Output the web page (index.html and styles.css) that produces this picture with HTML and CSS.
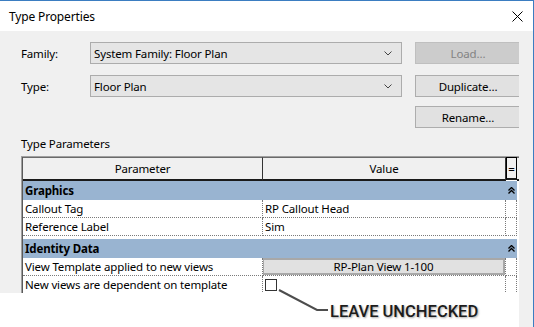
FILE: index.html
```html
<!DOCTYPE html>
<html lang="en">

<head>
    <meta charset="UTF-8" />
    <title>Type Properties</title>
    <link rel="stylesheet" href="styles.css">
</head>

<body>

    <div class="window">
        <div class="titlebar">
            <span class="title">Type Properties</span>
            <svg class="close" width="11" height="11" viewBox="0 0 11 11">
                <path d="M0.5 0.5 L10.5 10.5 M10.5 0.5 L0.5 10.5" stroke="#000" stroke-width="1" fill="none" />
            </svg>
        </div>

        <div class="frame">
            <div class="main">
                <div class="dialog">
                    <div class="form">
                        <label class="field-label">Family:</label>
                        <div class="select">
                            <span>System Family: Floor Plan</span>
                            <svg width="8" height="5" viewBox="0 0 8 5"><path d="M0.5 0.5 L4 4 L7.5 0.5" stroke="#444" fill="none" /></svg>
                        </div>
                        <div></div>
                        <button class="btn disabled">Load…</button>

                        <label class="field-label">Type:</label>
                        <div class="select">
                            <span>Floor Plan</span>
                            <svg width="8" height="5" viewBox="0 0 8 5"><path d="M0.5 0.5 L4 4 L7.5 0.5" stroke="#444" fill="none" /></svg>
                        </div>
                        <div></div>
                        <button class="btn">Duplicate…</button>

                        <div></div>
                        <div></div>
                        <div></div>
                        <button class="btn rename">Rename…</button>
                    </div>

                    <div class="section-label">Type Parameters</div>

                    <div class="table">
                        <div class="grid">
                            <div class="head">Parameter</div>
                            <div class="head">Value</div>
                            <div class="head eq">=</div>
                            <div class="head-end"></div>

                            <div class="group">Graphics</div>
                            <div class="group-toggle">
                                <svg width="7" height="7" viewBox="0 0 7 7"><path d="M0.5 3.5 L3.5 0.5 L6.5 3.5 M0.5 6.5 L3.5 3.5 L6.5 6.5" stroke="#000" stroke-width="1.3" fill="none" /></svg>
                            </div>
                            <div class="gap"></div>

                            <div class="cell">Callout Tag</div>
                            <div class="cell">RP Callout Head</div>
                            <div class="cell"></div>
                            <div class="gap"></div>

                            <div class="cell">Reference Label</div>
                            <div class="cell">Sim</div>
                            <div class="cell"></div>
                            <div class="gap"></div>

                            <div class="group second">Identity Data</div>
                            <div class="group-toggle second">
                                <svg width="7" height="7" viewBox="0 0 7 7"><path d="M0.5 3.5 L3.5 0.5 L6.5 3.5 M0.5 6.5 L3.5 3.5 L6.5 6.5" stroke="#000" stroke-width="1.3" fill="none" /></svg>
                            </div>
                            <div class="gap second"></div>

                            <div class="cell">View Template applied to new views</div>
                            <div class="cell"><div class="value-btn">RP-Plan View 1-100</div></div>
                            <div class="cell"></div>
                            <div class="gap"></div>

                            <div class="cell">New views are dependent on template</div>
                            <div class="cell"><span class="checkbox"></span></div>
                            <div class="cell"></div>
                            <div class="gap"></div>
                        </div>
                    </div>
                </div>

                <div class="note-area">
                    <span class="note">LEAVE UNCHECKED</span>
                </div>
            </div>
            <div class="side"></div>
        </div>

        <!-- callout line from the checkbox to the note -->
        <svg class="callout" width="534" height="327" viewBox="0 0 534 327">
            <polyline points="279,290 317,310 328,310" stroke="#4d4d4d" stroke-width="2" fill="none" />
        </svg>
    </div>

</body>

</html>
```

FILE: styles.css
```css
html,
body {
    margin: 0;
    padding: 0;
    background: #fff;
}

body {
    font-family: "Noto Sans", "Open Sans", sans-serif;
    font-size: 11.5px;
    letter-spacing: -0.15px;
    color: #000;
    overflow: hidden;
}

.window {
    position: relative;
    width: 533px;
    height: 326px;
    border-top: 1px solid #3b7dc1;
    border-right: 1px solid #3b7dc1;
    background: #fff;
}

.titlebar {
    height: 30px;
    display: flex;
    align-items: center;
    justify-content: space-between;
    padding: 0 10px 0 9px;
    background: #fff;
}

.title {
    font-size: 12px;
    margin-top: 1px;
}

.frame {
    display: flex;
    height: 296px;
}

.main {
    width: 519px;
    display: flex;
    flex-direction: column;
}

.side {
    flex: 1;
    background: #f0f0f0;
}

.dialog {
    height: 262px;
    overflow: hidden;
    background: #f0f0f0;
    padding: 11px 0 0 21px;
    box-sizing: border-box;
}

.form {
    display: grid;
    grid-template-columns: 69px 312px 13px 106px;
    grid-template-rows: 22px 22px 22px;
    row-gap: 11px;
    width: 500px;
}

.form .rename {
    margin-top: -2px;
}

.field-label {
    display: flex;
    align-items: center;
}

.select {
    display: flex;
    align-items: center;
    justify-content: space-between;
    background: #e5e5e5;
    border: 1px solid #acacac;
    padding: 0 9px 0 3px;
}

.btn {
    font-family: inherit;
    font-size: 11.5px;
    letter-spacing: -0.15px;
    color: #000;
    background: #e1e1e1;
    border: 1px solid #adadad;
    padding: 0;
    height: 22px;
}

.btn.disabled {
    background: #cccccc;
    border-color: #bfbfbf;
    color: #838383;
}

.section-label {
    margin-top: 6px;
    height: 16px;
    line-height: 16px;
}

.table {
    margin-top: 4px;
    width: 497px;
    border-top: 1px solid #a0a0a0;
    border-right: 1px solid #a0a0a0;
    border-left: 1px solid #a0a0a0;
    background: #fff;
}

.grid {
    display: grid;
    grid-template-columns: 240px 243px 11px 2px;
    border-left: 1px solid #5a5a5a;
}

.head {
    height: 21px;
    display: flex;
    align-items: center;
    justify-content: center;
    background: #f0f0f0;
    border-top: 1px solid #6a6a6a;
    border-right: 1px solid #333;
    border-bottom: 2px solid #1a1a1a;
}

.head.eq {
    border: 1px solid #000;
    border-bottom: 2px solid #1a1a1a;
    height: 20px;
}

.head-end {
    background: #f0f0f0;
    border-top: 1px solid #6a6a6a;
    border-bottom: 2px solid #1a1a1a;
}

.group {
    grid-column: span 2;
    height: 19px;
    line-height: 19px;
    padding-left: 2px;
    background: #99b4d1;
    font-weight: bold;
}

.group-toggle {
    height: 19px;
    display: flex;
    align-items: center;
    justify-content: center;
    background: #99b4d1;
}

.second {
    margin-top: 3px;
}

.gap {
    background: #fff;
}

.cell {
    height: 17px;
    line-height: 17px;
    padding-left: 2px;
    border-bottom: 1px dotted #7a7a7a;
    border-right: 1px dotted #7a7a7a;
    white-space: nowrap;
    overflow: hidden;
}

.cell:nth-child(4n+2) {
    padding-left: 3px;
}

.value-btn {
    margin-left: -3px;
    height: 13px;
    line-height: 13px;
    text-align: center;
    background: #e1e1e1;
    border: 2px solid #a8a8a8;
}

.checkbox {
    display: inline-block;
    width: 10px;
    height: 10px;
    margin-top: 3px;
    border: 1px solid #333;
    background: #fff;
    vertical-align: top;
}

.note-area {
    flex: 1;
    background: #fff;
    padding: 9px 0 0 330px;
}

.note {
    font-family: Roboto, "Liberation Sans", sans-serif;
    font-weight: 500;
    font-size: 16.5px;
    letter-spacing: 0;
    line-height: 20px;
    color: #1c1c1c;
    text-shadow: 1px 1px 2px rgba(0, 0, 0, 0.35);
}

.callout {
    position: absolute;
    top: -1px;
    left: 0;
    pointer-events: none;
}
```
